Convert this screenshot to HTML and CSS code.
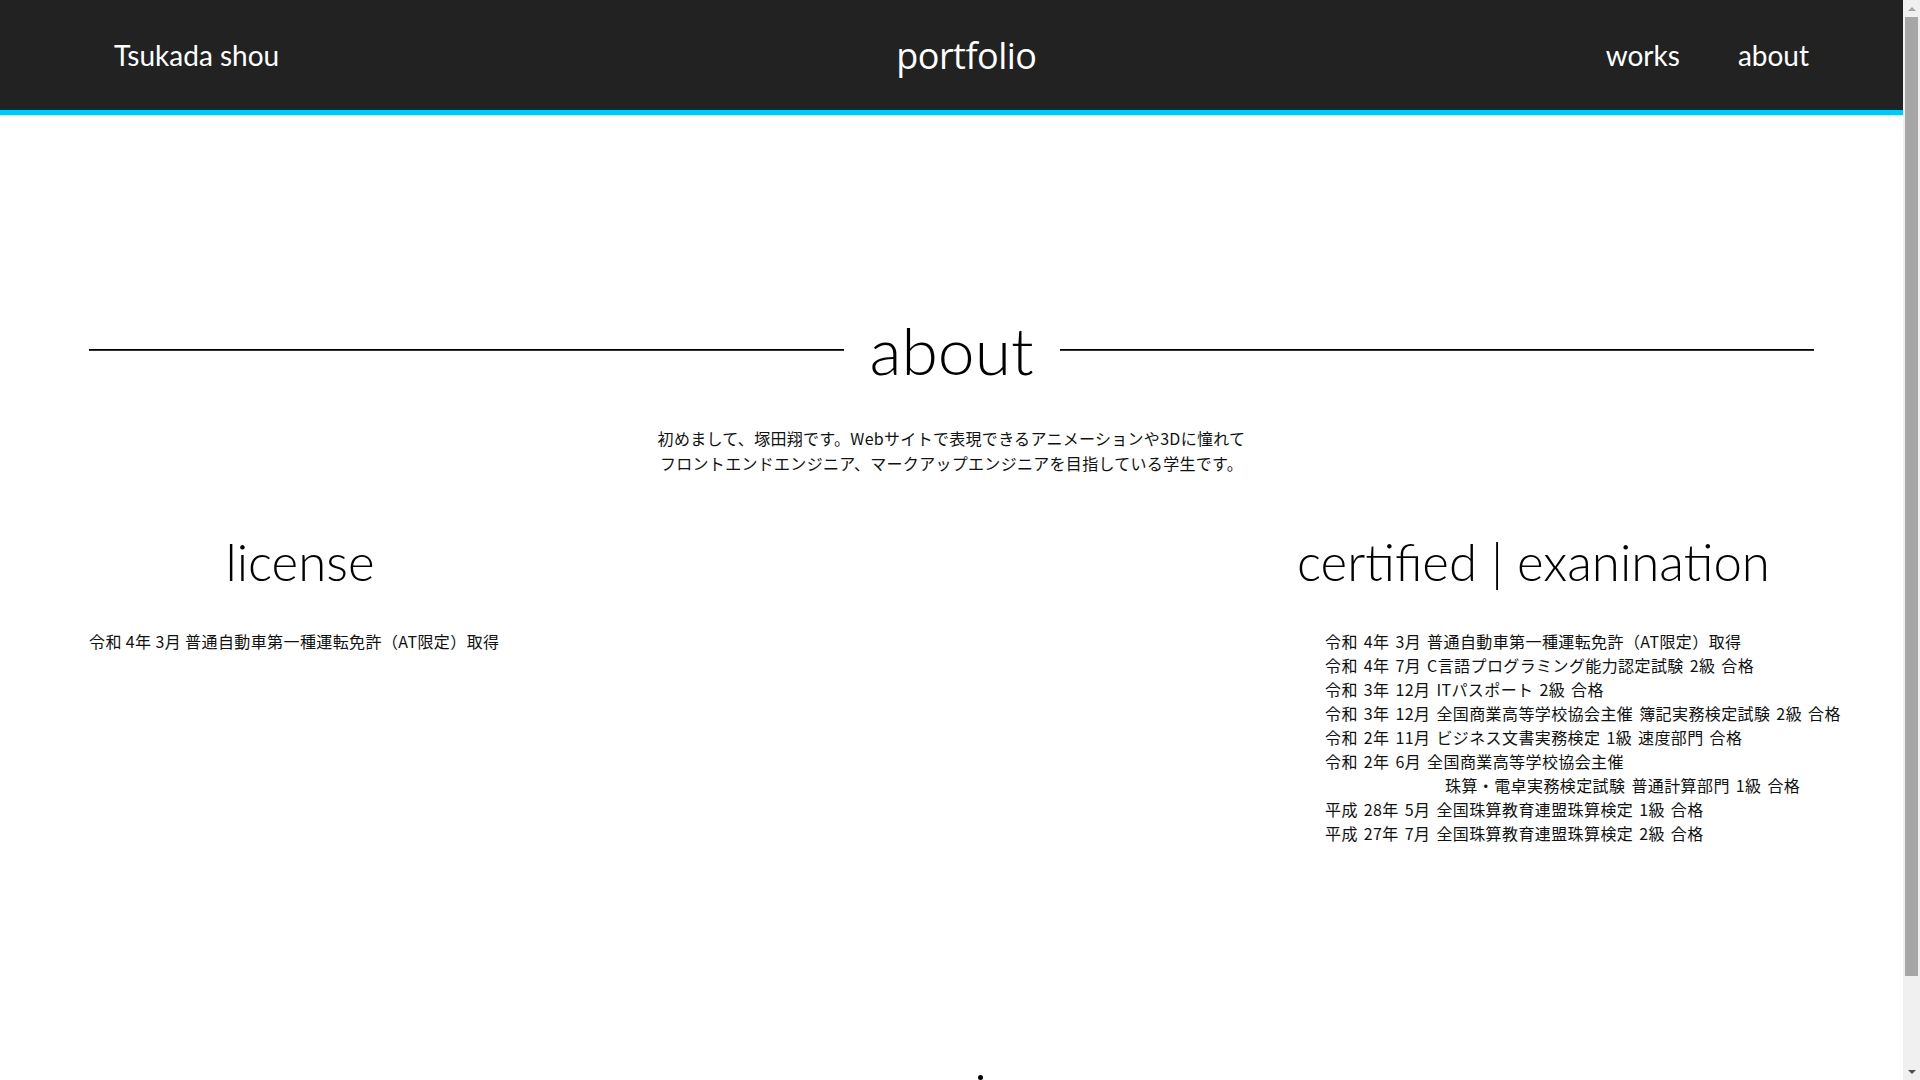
FILE: index.html
```html
<!DOCTYPE html>
<html lang="ja">
<head>
<meta charset="utf-8">
<title>portfolio | about</title>
<link rel="stylesheet" href="styles.css">
</head>
<body>
<div class="page">
  <header class="site-header">
    <div class="brand">Tsukada shou</div>
    <div class="site-title">portfolio</div>
    <nav class="nav">
      <a class="nav-link" href="#works">works</a>
      <a class="nav-link" href="#about">about</a>
    </nav>
  </header>

  <main class="about">
    <div class="section-title">
      <span class="rule"></span>
      <h1 class="section-heading">about</h1>
      <span class="rule"></span>
    </div>

    <p class="intro">初めまして、塚田翔です。Webサイトで表現できるアニメーションや3Dに憧れて<br>フロントエンドエンジニア、マークアップエンジニアを目指している学生です。</p>

    <div class="columns">
      <section class="col col-license">
        <h2 class="col-heading">license</h2>
        <ul class="list">
          <li>令和 4年 3月 普通自動車第一種運転免許（AT限定）取得</li>
        </ul>
      </section>
      <section class="col col-cert">
        <h2 class="col-heading">certified | exanination</h2>
        <ul class="list list-cert">
          <li>令和 4年 3月 普通自動車第一種運転免許（AT限定）取得</li>
          <li>令和 4年 7月 C言語プログラミング能力認定試験 2級 合格</li>
          <li>令和 3年 12月 ITパスポート 2級 合格</li>
          <li>令和 3年 12月 全国商業高等学校協会主催 簿記実務検定試験 2級 合格</li>
          <li>令和 2年 11月 ビジネス文書実務検定 1級 速度部門 合格</li>
          <li>令和 2年 6月 全国商業高等学校協会主催</li>
          <li class="indent">珠算・電卓実務検定試験 普通計算部門 1級 合格</li>
          <li>平成 28年 5月 全国珠算教育連盟珠算検定 1級 合格</li>
          <li>平成 27年 7月 全国珠算教育連盟珠算検定 2級 合格</li>
        </ul>
      </section>
    </div>
  </main>

  <footer class="foot">
    <span class="foot-dot"></span>
  </footer>
</div>

<div class="scrollbar" aria-hidden="true">
  <div class="sb-btn"><span class="sb-up"></span></div>
  <div class="sb-thumb"></div>
  <div class="sb-rest"></div>
  <div class="sb-btn"><span class="sb-down"></span></div>
</div>
</body>
</html>
```

FILE: styles.css
```css
html, body {
  margin: 0;
  padding: 0;
}
body {
  background: #fff;
  color: #111;
  font-family: "Lato", "Noto Sans CJK JP", sans-serif;
  overflow-x: hidden;
}
.page {
  width: 1903px;
}

/* header */
.site-header {
  display: flex;
  align-items: center;
  height: 110px;
  background: #222;
  border-bottom: 5px solid #00c8f8;
  padding: 0 94px 0 114px;
  color: #fff;
}
.brand {
  font-size: 28px;
  font-weight: 400;
}
.site-title {
  font-family: "Open Sans", sans-serif;
  font-size: 36px;
  margin-left: 617px;
  letter-spacing: -0.5px;
}
.nav {
  margin-left: auto;
  display: flex;
  gap: 58px;
}
.nav-link {
  color: #fff;
  text-decoration: none;
  font-size: 28px;
}

/* about section */
.about {
  padding: 196px 89px 0;
}
.section-title {
  display: flex;
  align-items: center;
}
.rule {
  flex: 1;
  height: 2px;
  border-top: 1px solid #000;
  box-sizing: border-box;
  background: #333;
}
.section-heading {
  margin: 0;
  padding: 0 26px;
  font-size: 66px;
  font-weight: 300;
  line-height: 77px;
  color: #000;
}
.intro {
  margin: 38px 0 0;
  text-align: center;
  font-family: "Noto Sans CJK JP", sans-serif;
  font-size: 16px;
  letter-spacing: 0.3px;
  line-height: 25px;
  color: #111;
}

.columns {
  display: flex;
  justify-content: space-between;
  margin-top: 56px;
}
.col-heading {
  margin: 0;
  font-size: 51px;
  font-weight: 300;
  line-height: 60px;
  color: #000;
}
.col-license {
  width: 422px;
}
.col-license .col-heading {
  text-align: center;
}
.col-cert {
  width: 517px;
}
.list {
  list-style: none;
  margin: 37px 0 0;
  padding: 0;
  font-family: "Noto Sans CJK JP", sans-serif;
  font-size: 16px;
  letter-spacing: 0.4px;
  line-height: 24px;
  white-space: nowrap;
}
.list-cert {
  padding-left: 28px;
  word-spacing: 2px;
}
.indent {
  padding-left: 120px;
}

.foot {
  height: 101px;
  margin-top: 230px;
  padding-left: 978px;
}
.foot-dot {
  display: block;
  width: 5px;
  height: 5px;
  border-radius: 50%;
  background: #000;
}

/* window scrollbar (drawn over the page edge) */
.scrollbar {
  position: fixed;
  top: 0;
  right: 0;
  width: 17px;
  height: 1080px;
  background: #f0f0f0;
  display: flex;
  flex-direction: column;
}
.sb-btn {
  height: 17px;
  display: flex;
  align-items: center;
  justify-content: center;
  flex: none;
}
.sb-up {
  width: 0;
  height: 0;
  border-left: 4px solid transparent;
  border-right: 4px solid transparent;
  border-bottom: 4px solid #a3a3a3;
}
.sb-down {
  width: 0;
  height: 0;
  border-left: 4px solid transparent;
  border-right: 4px solid transparent;
  border-top: 4px solid #505050;
}
.sb-thumb {
  height: 959px;
  margin: 0 2px;
  background: #a6a6a6;
  flex: none;
}
.sb-rest {
  flex: 1;
}
```
